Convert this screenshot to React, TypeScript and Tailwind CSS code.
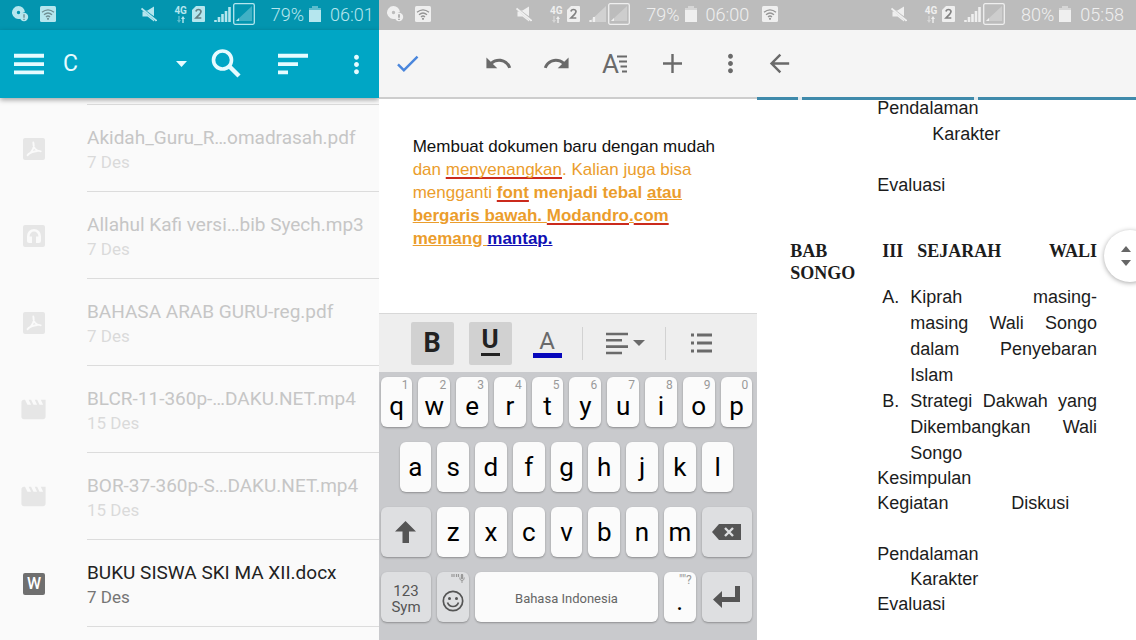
import type { ReactNode } from "react";

const files = [
  { name: "Akidah_Guru_R…omadrasah.pdf", date: "7 Des", type: "pdf", enabled: false },
  { name: "Allahul Kafi versi…bib Syech.mp3", date: "7 Des", type: "audio", enabled: false },
  { name: "BAHASA ARAB GURU-reg.pdf", date: "7 Des", type: "pdf", enabled: false },
  { name: "BLCR-11-360p-…DAKU.NET.mp4", date: "15 Des", type: "video", enabled: false },
  { name: "BOR-37-360p-S…DAKU.NET.mp4", date: "15 Des", type: "video", enabled: false },
  { name: "BUKU SISWA SKI MA XII.docx", date: "7 Des", type: "word", enabled: true },
];

const topKeys = ["q", "w", "e", "r", "t", "y", "u", "i", "o", "p"];
const middleKeys = ["a", "s", "d", "f", "g", "h", "j", "k", "l"];
const bottomKeys = ["z", "x", "c", "v", "b", "n", "m"];

const outline = [
  {
    marker: "A.",
    lines: ["Kiprah masing-", "masing Wali Songo", "dalam Penyebaran"],
    last: "Islam",
  },
  {
    marker: "B.",
    lines: ["Strategi Dakwah yang", "Dikembangkan Wali"],
    last: "Songo",
  },
];

function StatusBar({
  className,
  disc = true,
  fullSignal = true,
  battery,
  time,
}: {
  className: string;
  disc?: boolean;
  fullSignal?: boolean;
  battery: string;
  time: string;
}) {
  return (
    <div className={`flex h-[30px] shrink-0 items-center pb-0.5 ${className}`}>
      {disc && (
        <svg width="18" height="18" viewBox="0 0 18 18" className="mr-[11px]">
          <path
            fill="currentColor"
            fillRule="evenodd"
            d="M7.500 1a6.500 6.500 0 1 0 2.500 12.500a5 5 0 0 1 3.900-6.500A6.500 6.500 0 0 0 7.500 1zM7.500 5.800a1.700 1.700 0 1 1 0 3.400a1.700 1.700 0 0 1 0-3.400z"
          />
          <circle cx="13" cy="12" r="4.200" fill="currentColor" />
          <path d="M13 9.300v3.400M13 13.700v1.200" stroke="#000" strokeOpacity=".4" strokeWidth="1.300" />
        </svg>
      )}
      <svg width="16" height="16" viewBox="0 0 16 16">
        <rect width="16" height="16" rx="1.500" fill="currentColor" />
        <g fill="none" stroke="#000" strokeOpacity=".38" strokeWidth="1.300">
          <path d="M2 6.300q6-5 12 0M4 8.700q4-3.500 8 0M6 11q2-2 4 0" />
        </g>
        <circle cx="8" cy="12.800" r="1.100" fill="#000" fillOpacity=".38" />
      </svg>
      <div className="ml-auto flex items-center">
        <svg width="16" height="16" viewBox="0 0 16 16" className="mr-[17px]">
          <path fill="currentColor" d="M3 4.500h3.500L13 .5v9.800L10.500 8.500 5.500 4.800zM1.500 5.500v5h5L13 15.500V14L3 5.500z" />
          <path d="M.5 2.500l15 12.300" stroke="currentColor" strokeWidth="1.800" />
        </svg>
        <div className="mr-1 flex w-[14px] flex-col items-center">
          <span className="text-[10px] leading-[10px] font-bold">4G</span>
          <svg width="10" height="7" viewBox="0 0 10 7">
            <path fill="currentColor" fillOpacity=".5" d="M2.300 0h1.400v4H5L3 7 1 4h1.300z" />
            <path fill="currentColor" d="M6.300 7h1.400V3H9L7 0 5 3h1.300z" />
          </svg>
        </div>
        <svg width="13" height="16" viewBox="0 0 13 16" className="mr-[9px]">
          <path fill="currentColor" d="M4 0h8a1 1 0 0 1 1 1v14a1 1 0 0 1-1 1H1a1 1 0 0 1-1-1V4z" />
          <path
            d="M4 5.500q.3-2 2.500-2t2.500 2q0 1.200-1.500 2.800L4 12h5.300"
            fill="none"
            stroke="#000"
            strokeOpacity=".45"
            strokeWidth="1.700"
          />
        </svg>
        {fullSignal ? (
          <svg width="17" height="16" viewBox="0 0 17 16" className="mr-0.5">
            <path
              d="M1.500 16v-2M5 16v-5M8.500 16V8M12 16V5M15.500 16V1"
              stroke="currentColor"
              strokeWidth="2.600"
            />
          </svg>
        ) : (
          <svg width="17" height="16" viewBox="0 0 17 16" className="mr-0.5">
            <path fill="currentColor" fillOpacity=".4" d="M0 16L17 0v16z" />
            <path d="M1.500 16v-2M5 16v-5" stroke="currentColor" strokeWidth="2.200" />
          </svg>
        )}
        <svg width="22" height="22" viewBox="0 0 22 22" className="mr-4">
          <rect x=".7" y=".7" width="20.600" height="20.600" rx="1.500" fill="none" stroke="currentColor" strokeWidth="1.300" />
          <path fill="currentColor" fillOpacity=".35" d="M3 18L19 3v15z" />
          <path fill="currentColor" d="M3 18l3-3v3z" />
        </svg>
        <span className="text-[18px] font-light">{battery}</span>
        <svg width="12" height="16" viewBox="0 0 12 16" className="mr-[9px] ml-[5px]">
          <path fill="currentColor" fillOpacity=".5" d="M3 0h6v2h3v3H0V2h3z" />
          <path fill="currentColor" d="M0 4h12v12H0z" />
        </svg>
        <span className="text-[18px] font-light">{time}</span>
      </div>
    </div>
  );
}

function Icon({ path, size = 29, className = "" }: { path: string; size?: number; className?: string }) {
  return (
    <svg width={size} height={size} viewBox="0 0 24 24" fill="currentColor" className={`shrink-0 ${className}`}>
      <path d={path} />
    </svg>
  );
}

const MORE =
  "M12 8c1.100 0 2-.9 2-2s-.9-2-2-2-2 .9-2 2 .9 2 2 2zm0 2c-1.100 0-2 .9-2 2s.9 2 2 2 2-.9 2-2-.9-2-2-2zm0 6c-1.100 0-2 .9-2 2s.9 2 2 2 2-.9 2-2-.9-2-2-2z";

function FileIcon({ type }: { type: string }) {
  if (type === "video") {
    return (
      <Icon path="M18 4l2 4h-3l-2-4h-2l2 4h-3l-2-4H8l2 4H7L5 4H4c-1.100 0-1.990.9-1.990 2L2 18c0 1.100.9 2 2 2h16c1.100 0 2-.9 2-2V4h-4z" />
    );
  }
  if (type === "word") {
    return (
      <span className="flex size-[22px] items-center justify-center rounded-[2px] bg-current">
        <span className="text-[16px] leading-none font-medium text-white">W</span>
      </span>
    );
  }
  return (
    <svg width="22" height="22" viewBox="0 0 22 22">
      <rect width="22" height="22" rx="2" fill="currentColor" />
      {type === "pdf" ? (
        <path
          d="M10.300 4.500q0 4 1.500 6 2 2.500 6 2.800M10.500 5q.8 3-.5 6t-5.500 6.300M5.500 16q3-2.500 8.500-3"
          fill="none"
          stroke="#fafafa"
          strokeWidth="1.800"
          strokeLinecap="round"
        />
      ) : (
        <>
          <path d="M5.300 13v-2a5.700 5.700 0 0 1 11.400 0v2" fill="none" stroke="#fafafa" strokeWidth="2.600" />
          <path d="M4 11.500H9V18H6.300a2.300 2 0 0 1-2.300-2zM13 11.500h5V16a2.300 2 0 0 1-2.300 2H13z" fill="#fafafa" />
        </>
      )}
    </svg>
  );
}

function FileList() {
  return (
    <section className="flex flex-col overflow-hidden bg-[#fafafa]">
      <StatusBar className="bg-[#0395af] pr-[5px] pl-[11px] text-[#b5e6ee]" battery="79%" time="06:01" />
      <header className="z-10 flex h-[68px] shrink-0 items-center bg-[#00a6c5] pr-2 pl-[9px] text-[#e6fbff] shadow-[0_2px_5px_rgba(0,0,0,0.35)]">
        <button type="button" aria-label="Menu">
          <Icon size={40} path="M3 18.200h18v-2.300H3zm0-5h18v-2.300H3zm0-7.300v2.300h18V5.900z" />
        </button>
        <div className="relative ml-3 flex-1">
          <select aria-label="Folder" className="w-full appearance-none bg-transparent px-0.5 text-[23px] outline-none">
            <option>C</option>
          </select>
          <svg width="11" height="6" viewBox="0 0 11 6" className="pointer-events-none absolute top-1/2 right-0 -translate-y-1/2">
            <path d="M0 0h11L5.500 6z" fill="currentColor" />
          </svg>
        </div>
        <button type="button" aria-label="Search" className="ml-5">
          <svg width="40" height="40" viewBox="0 0 40 40" fill="none" stroke="currentColor">
            <circle cx="15.500" cy="16" r="9" strokeWidth="3.600" />
            <path d="M22 22l10 10" strokeWidth="4.400" />
          </svg>
        </button>
        <button type="button" aria-label="Sort" className="ml-[26px]">
          <Icon size={40} path="M3 18.200h6v-2.300H3zM3 5.900v2.300h18V5.900zm0 7.300h12v-2.300H3z" />
        </button>
        <button type="button" aria-label="More options" className="ml-[29px]">
          <Icon path={MORE} />
        </button>
      </header>
      <ul className="pt-[6px]">
        <li className="ml-[87px] border-b border-[#dcdcdc]" aria-hidden="true" />
        {files.map((file) => (
          <li key={file.name} className="flex h-[87px]">
            <div className={`flex w-[87px] items-center pl-[23px] ${file.enabled ? "text-[#6f6f6f]" : "text-[#e6e6e6]"}`}>
              <div className={file.type === "video" ? "-ml-1" : ""}>
                <FileIcon type={file.type} />
              </div>
            </div>
            <div className="flex flex-1 flex-col justify-center border-b border-[#dcdcdc] pt-1 leading-[25px] whitespace-nowrap">
              <span className={`text-[19px] ${file.enabled ? "text-[#222]" : "text-[#c6c6c6]"}`}>{file.name}</span>
              <span className={`text-[17px] ${file.enabled ? "text-[#757575]" : "text-[#dadada]"}`}>{file.date}</span>
            </div>
          </li>
        ))}
      </ul>
    </section>
  );
}

function Key({
  children,
  label,
  hint,
  dark = false,
  className = "col-span-2",
}: {
  children: ReactNode;
  label?: string;
  hint?: ReactNode;
  dark?: boolean;
  className?: string;
}) {
  return (
    <button
      type="button"
      aria-label={label}
      className={`relative flex h-[50px] items-center justify-center rounded-[6px] shadow-[0_1px_2px_rgba(0,0,0,0.3)] ${
        dark ? "bg-[#dedfe1] text-[#555]" : "bg-[#fbfbfb] text-black"
      } ${className}`}
    >
      {children}
      {hint && <span className="absolute top-0.5 right-1 text-[12px] leading-[12px] text-[#999]">{hint}</span>}
    </button>
  );
}

function Keyboard() {
  return (
    <div className="grid shrink-0 grid-cols-20 gap-x-[6px] gap-y-[15px] bg-[#c9cacd] pt-[5px] pr-[5px] pb-[18px] pl-[2px] text-[26px] leading-[30px]">
      {topKeys.map((k, i) => (
        <Key key={k} hint={(i + 1) % 10 + ""}>
          <span className="pt-[7px]">{k}</span>
        </Key>
      ))}
      {middleKeys.map((k, i) => (
        <Key key={k} className={i === 0 ? "col-span-2 col-start-2" : "col-span-2"}>
          {k}
        </Key>
      ))}
      <Key dark label="Shift" className="col-span-3 col-start-1">
        <svg width="21" height="22" viewBox="0 0 21 22">
          <path fill="currentColor" d="M10.500 0L21 10.500h-7V22H7.500V10.500H0z" />
        </svg>
      </Key>
      {bottomKeys.map((k) => (
        <Key key={k}>{k}</Key>
      ))}
      <Key dark label="Backspace" className="col-span-3">
        <svg width="29" height="16" viewBox="0 0 29 16">
          <path fill="currentColor" d="M0 8l7-8h22v16H7z" />
          <path d="M13 4l8 8M21 4l-8 8" stroke="#dedfe1" strokeWidth="2.400" />
        </svg>
      </Key>
      <Key dark className="col-span-3">
        <span className="pt-1 text-[15px] leading-4">
          123
          <br />
          Sym
        </span>
      </Key>
      <Key
        dark
        label="Emoji"
        hint={
          <svg width="14" height="9" viewBox="0 0 14 9">
            <path d="M1 0v3M3 0v3M5.500 0v3M7.500 0v3M11 0v5" stroke="#999" strokeWidth="1.200" />
            <path d="M8.700 3.500q0 3 2.300 3t2.300-3M11 6v3" fill="none" stroke="#999" />
            <rect x="9.800" y="0" width="2.400" height="5" rx="1" fill="#999" />
          </svg>
        }
      >
        <svg width="22" height="22" viewBox="0 0 22 22" className="mt-2">
          <circle cx="11" cy="11" r="9.700" fill="none" stroke="currentColor" strokeWidth="1.700" />
          <circle cx="7.500" cy="8.500" r="1.500" fill="currentColor" />
          <circle cx="14.500" cy="8.500" r="1.500" fill="currentColor" />
          <path d="M5.500 12.500q1.500 4 5.500 4t5.500-4" fill="none" stroke="currentColor" strokeWidth="1.700" />
        </svg>
      </Key>
      <Key className="col-span-10">
        <span className="pt-1 text-[13px] text-[#666]">Bahasa Indonesia</span>
      </Key>
      <Key hint={'""?'}>
        <span className="pt-2">.</span>
      </Key>
      <Key dark label="Enter" className="col-span-3">
        <svg width="27" height="22" viewBox="0 0 27 22">
          <path fill="currentColor" d="M22 0h5v16H9v6L0 13.500 9 5v6h13z" />
        </svg>
      </Key>
    </div>
  );
}

const typo = "underline decoration-[#cb2a1c] decoration-2 underline-offset-2 [text-decoration-skip-ink:none]";

function Editor() {
  return (
    <section className="flex flex-col overflow-hidden bg-white">
      <StatusBar className="bg-[#bcbcbc] pr-2 pl-[7px] text-[#efefef]" fullSignal={false} battery="79%" time="06:00" />
      <header className="flex h-[69px] shrink-0 items-center border-b-2 border-[#cdcdcd] bg-[#f5f5f5] pr-3 pl-[14px] text-[#6a6a6a]">
        <button type="button" aria-label="Done" className="mr-auto text-[#4a86dc]">
          <Icon path="M9 16.170L4.830 12l-1.420 1.410L9 19 21 7l-1.410-1.410z" />
        </button>
        <div className="flex gap-[29px]">
          <button type="button" aria-label="Undo">
            <Icon path="M12.500 8c-2.650 0-5.050.990-6.900 2.600L2 7v9h9l-3.620-3.620c1.390-1.160 3.160-1.880 5.120-1.880 3.540 0 6.550 2.310 7.600 5.500l2.370-.780C21.080 11.030 17.150 8 12.500 8z" />
          </button>
          <button type="button" aria-label="Redo">
            <Icon path="M18.400 10.600C16.550 8.990 14.150 8 11.500 8c-4.650 0-8.580 3.030-9.960 7.220L3.900 16c1.050-3.190 4.050-5.500 7.600-5.500 1.950 0 3.730.720 5.120 1.880L13 16h9V7l-3.600 3.600z" />
          </button>
          <button type="button" aria-label="Format">
            <svg width="29" height="29" viewBox="0 0 29 29" fill="currentColor">
              <text x="2" y="24" fontSize="26" fontFamily="Roboto, sans-serif">
                A
              </text>
              <path d="M17 7.500h10M19 12.500h8M20.500 17.500H27M22 22.500h5" stroke="currentColor" strokeWidth="2" />
            </svg>
          </button>
          <button type="button" aria-label="Insert">
            <svg width="29" height="29" viewBox="0 0 29 29">
              <path d="M14.500 5v19M5 14.500h19" stroke="currentColor" strokeWidth="2.400" />
            </svg>
          </button>
          <button type="button" aria-label="More options">
            <Icon path={MORE} />
          </button>
        </div>
      </header>
      <article className="flex-1 pt-9 pl-[34px] font-['Liberation_Sans',Arial,sans-serif] text-[17px] leading-[23px] whitespace-nowrap text-[#eb9d2c]">
        <p className="text-[#111]">Membuat dokumen baru dengan mudah</p>
        <p>
          dan <span className={typo}>menyenangkan</span>. Kalian juga bisa
        </p>
        <p>
          mengganti{" "}
          <b>
            <span className={typo}>font</span> menjadi tebal <u>atau</u>
          </b>
        </p>
        <p className="font-bold">
          <u>bergaris bawah. </u>
          <span className={typo}>Modandro</span>
          <u>.</u>
          <span className={typo}>com</span>
        </p>
        <p className="font-bold">
          <u>memang </u>
          <u className="text-[#1010b4]">mantap.</u>
        </p>
      </article>
      <div className="flex h-[59px] shrink-0 items-center border-t border-[#d8d8d8] bg-[#eee] pl-8 text-[#6a6a6a]">
        <button type="button" aria-label="Bold" className="size-[43px] rounded-[2px] bg-[#d1d1d1] text-[27px] leading-[43px] font-bold text-[#222]">
          B
        </button>
        <button type="button" aria-label="Underline" className="ml-[15px] flex size-[43px] flex-col items-center rounded-[2px] bg-[#d1d1d1] pt-1 text-[#222]">
          <span className="text-[26px] leading-[27px] font-bold">U</span>
          <span className="h-[3px] w-[19px] bg-[#222]" />
        </button>
        <button type="button" aria-label="Text color" className="ml-[14px] flex size-[43px] flex-col items-center pt-[7px]">
          <span className="text-[24px] leading-6">A</span>
          <span className="h-[5px] w-[29px] bg-[#0606bb]" />
        </button>
        <span className="ml-[13px] h-[33px] w-px bg-[#d2d2d2]" />
        <button type="button" aria-label="Align" className="ml-[23px] flex items-center gap-[5px]">
          <svg width="22" height="23" viewBox="0 0 22 23">
            <path d="M0 2h22M0 8.300h16M0 14.600h22M0 21h16" stroke="currentColor" strokeWidth="2.600" />
          </svg>
          <svg width="12" height="6" viewBox="0 0 12 6">
            <path d="M0 0h12L6 6z" fill="currentColor" />
          </svg>
        </button>
        <span className="ml-5 h-[33px] w-px bg-[#d2d2d2]" />
        <button type="button" aria-label="Bulleted list" className="ml-[25px]">
          <svg width="21" height="20" viewBox="0 0 21 20">
            <path d="M0 2h3M6 2h15M0 10h3M6 10h15M0 18h3M6 18h15" stroke="currentColor" strokeWidth="3" />
          </svg>
        </button>
      </div>
      <Keyboard />
    </section>
  );
}

function Reader() {
  return (
    <section className="relative flex flex-col overflow-hidden bg-white">
      <StatusBar className="bg-[#bcbcbc] pr-3 pl-[5px] text-[#efefef]" disc={false} battery="80%" time="05:58" />
      <header className="flex h-[67px] shrink-0 items-center bg-[#f5f5f5] pl-2 text-[#6a6a6a]">
        <button type="button" aria-label="Back">
          <Icon path="M20 11H7.830l5.590-5.590L12 4l-8 8 8 8 1.410-1.410L7.830 13H20v-2z" />
        </button>
      </header>
      <div className="z-10 flex h-[3px] shrink-0 gap-1 bg-[#e3e9ec]">
        <span className="w-[41px] bg-[#3f8aab]" />
        <span className="w-[172px] bg-[#3f8aab]" />
        <span className="flex-1 bg-[#3f8aab]" />
      </div>
      <article className="-mt-[5px] pr-[39px] pl-[33px] font-['Liberation_Sans',Arial,sans-serif] text-[18px] leading-[26px] text-[#1c1c1c]">
        <div className="pl-[87px]">
          <p>Pendalaman</p>
          <p className="pl-[55px]">Karakter</p>
          <p className="pt-[25px]">Evaluasi</p>
        </div>
        <h2 className="mt-[42px] font-['Liberation_Serif','Times_New_Roman',serif] font-bold leading-[22px]">
          <span className="flex">
            <span className="w-[92px]">BAB</span>
            <span className="w-[35px]">III</span>
            <span className="flex-1">SEJARAH</span>
            <span>WALI</span>
          </span>
          SONGO
        </h2>
        <ol className="pl-[92px]">
          {outline.map((item) => (
            <li key={item.marker} className="flex">
              <span className="w-7 shrink-0">{item.marker}</span>
              <div className="flex-1">
                {item.lines.map((line) => (
                  <p key={line} className="whitespace-nowrap [text-align-last:justify]">
                    {line}
                  </p>
                ))}
                <p>{item.last}</p>
              </div>
            </li>
          ))}
        </ol>
        <div className="pl-[87px] leading-[25px]">
          <p>Kesimpulan</p>
          <p className="w-48 [text-align-last:justify]">Kegiatan Diskusi</p>
          <p className="pt-[26px]">Pendalaman</p>
          <p className="pl-[33px]">Karakter</p>
          <p>Evaluasi</p>
        </div>
      </article>
      <button
        type="button"
        aria-label="Scroll"
        className="absolute top-[230px] -right-5 flex size-[52px] flex-col items-center gap-2 rounded-full bg-white pt-4 pr-2 text-[#666] shadow-[0_1px_5px_rgba(0,0,0,0.35)]"
      >
        <svg width="10" height="6" viewBox="0 0 10 6">
          <path d="M0 6h10L5 0z" fill="currentColor" />
        </svg>
        <svg width="10" height="6" viewBox="0 0 10 6">
          <path d="M0 0h10L5 6z" fill="currentColor" />
        </svg>
      </button>
    </section>
  );
}

export default function App() {
  return (
    <main className="grid min-h-screen grid-cols-3 font-[Roboto,sans-serif]">
      <FileList />
      <Editor />
      <Reader />
    </main>
  );
}
